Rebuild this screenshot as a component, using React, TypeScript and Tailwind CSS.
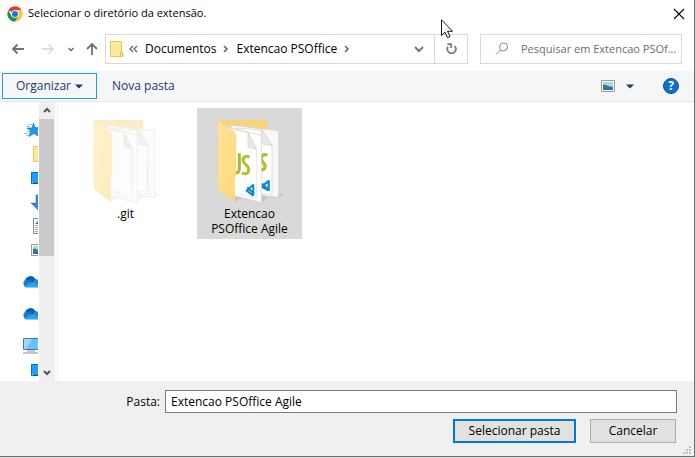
import type { ReactNode } from "react";
import { useState } from "react";

function ChromeLogo() {
  return (
    <svg width="16" height="16" viewBox="0 0 48 48" aria-hidden="true">
      <circle cx="24" cy="24" r="23" fill="#fff" />
      <path d="M24 24 L4.1 12.5 A23 23 0 0 1 43.9 12.5 L24 12.5 Z" fill="#e33b2e" />
      <path d="M24 12.5 H43.9 A23 23 0 0 1 24 47 L34 29.7 Z" fill="#fcc934" />
      <path d="M4.1 12.5 L14 29.7 L34 29.7 L24 47 A23 23 0 0 1 4.1 12.5 Z" fill="#1e9448" />
      <circle cx="24" cy="24" r="11.5" fill="#fff" />
      <circle cx="24" cy="24" r="9" fill="#1a73e8" />
    </svg>
  );
}

function Arrow({ kind }: { kind: "left" | "right" | "up" }) {
  const d = {
    left: "M13 7H2M6.5 2.5L2 7l4.500 4.500",
    right: "M1 7h11M7.500 2.500L12 7l-4.500 4.500",
    up: "M7 13V2M2 7l5-5 5 5",
  }[kind];
  return (
    <svg width="14" height="14" viewBox="0 0 14 14" fill="none" aria-hidden="true" stroke={kind === "right" ? "#d4d4d4" : "#717171"} strokeWidth={kind === "right" ? 1.3 : 1.8}>
      <path d={d} />
    </svg>
  );
}

function Chevron({ d, w = 6, h = 8, width = 1.4, color = "#666" }: { d: string; w?: number; h?: number; width?: number; color?: string }) {
  return (
    <svg width={w} height={h} viewBox={`0 0 ${w} ${h}`} fill="none" stroke={color} strokeWidth={width} className="shrink-0" aria-hidden="true">
      <path d={d} />
    </svg>
  );
}

function Caret() {
  return (
    <svg width="8" height="5" viewBox="0 0 8 5" aria-hidden="true">
      <path d="M0 0.500h8L4 4.500z" fill="#1c3a63" />
    </svg>
  );
}

function SmallFolder() {
  return (
    <svg width="14" height="16" viewBox="0 0 14 16" aria-hidden="true">
      <path d="M.5.500h11v11l1.500 1v3H.5z" fill="#ffe79b" stroke="#e8c760" />
      <path d="M10.500 15v-3.500h2V15" fill="#fff0b8" stroke="#dcb955" />
    </svg>
  );
}

function BigFolder({ code }: { code: boolean }) {
  const edge = code ? "#d0d0d0" : "#e9e9e9";
  const sheet = code ? "#fff" : "#fdfdfd";
  const line = code ? "#f2dfae" : "#faecca";
  return (
    <svg width="71" height="86" viewBox="30 54 213 258" aria-hidden="true">
      <defs>
        <linearGradient id={code ? "flap-a" : "flap-b"} x1="0" y1="0" x2="1" y2="1">
          <stop offset="0" stopColor={code ? "#ffe59b" : "#fff2d0"} />
          <stop offset="1" stopColor={code ? "#fbd878" : "#fdebba"} />
        </linearGradient>
      </defs>
      <path d="M92 306l20-12 60 14 20-16 30 1 20-10-20-4-130 12z" fill={code ? "#bdbdbd" : "#f1f1f1"} opacity=".7" />
      <path d="M42 60H190V120H92z" fill={code ? "#f6d47e" : "#fcedc6"} />
      <path d="M80 75L224 92V292L150 284z" fill={code ? "#f8f8f8" : "#fbfbfb"} stroke={edge} strokeWidth="2" />
      <path d="M100 84L176 91L204 136V283L150 280z" fill={sheet} stroke={edge} strokeWidth="2" />
      <path d="M172 91l32 46-32-6z" fill={code ? "#e9e9e9" : "#f1f1f1"} stroke={edge} strokeWidth="2" />
      <path d="M150 84l24 5 26 44" fill="none" stroke={line} strokeWidth="2" />
      {code ? (
        <>
          <path d="M190 166c-16-7-23 7-14 20 13 12 8 27-8 22" fill="none" stroke="#b7bd2e" strokeWidth="10" />
          <path d="M194 241v32M194 243l-21 17 21 11M173 251l20 18" fill="none" stroke="#1388cf" strokeWidth="7" />
        </>
      ) : (
        <path d="M200 195v70" stroke="#f9ebc9" strokeWidth="2" />
      )}
      <path d="M62 79L172 106V308L92 287z" fill={sheet} stroke={edge} strokeWidth="2" />
      <path d="M80 88L132 98L158 150V296L94 280" fill={sheet} stroke={edge} strokeWidth="1.500" />
      <path d="M76 82l56 13 24 50" fill="none" stroke={line} strokeWidth="2" />
      <path d="M132 98l24 50-24-8z" fill={code ? "#e9e9e9" : "#f1f1f1"} stroke={edge} strokeWidth="2" />
      {code ? (
        <>
          <path d="M106 160v46c0 11-5 14-14 12" fill="none" stroke="#aeb52f" strokeWidth="9" />
          <path d="M136 172c-12-8-21 1-18 12 3 11 18 12 16 26-1 12-11 14-20 8" fill="none" stroke="#b7bd2e" strokeWidth="9" />
          <path d="M148 253v34M148 254l-20 18 20 15M130 262l18 17" fill="none" stroke="#1388cf" strokeWidth="6" />
        </>
      ) : (
        <path d="M152 153v112M94 270l54 20M176 274h20" fill="none" stroke="#f5ead0" strokeWidth="2" />
      )}
      <path d="M42 62L86 92c7 5 10 9 10 17V225l-4 12v68L42 267z" fill={`url(#${code ? "flap-a" : "flap-b"})`} stroke={code ? "#f4d27b" : "#fbe8b8"} strokeWidth="1" />
    </svg>
  );
}

function PictureIcon() {
  return (
    <svg width="14" height="12" viewBox="0 0 14 12" aria-hidden="true">
      <path d="M.5.500h13v11H.5z" fill="#fff" stroke="#9a9a9a" />
      <path d="M2 2h10v8H2z" fill="#a9d3f5" />
      <path d="M2 5c3-1 5 2 10 2v3H2z" fill="#3c7d6b" />
      <path d="M2 8h10v2H2z" fill="#2c6faf" />
    </svg>
  );
}

function DesktopIcon() {
  return (
    <svg width="15" height="12" viewBox="0 0 15 12" aria-hidden="true">
      <path d="M.5.500h14v11H.5z" fill="#1ba1ff" stroke="#0a6cbb" />
      <path d="M1 10.500h14v1H1z" fill="#0b5aa0" />
      <path d="M1 10h1v1H1z" fill="#fff" />
    </svg>
  );
}

function CloudIcon() {
  return (
    <svg width="20" height="12" viewBox="0 0 20 12" aria-hidden="true">
      <path d="M3 6a5.500 5.500 0 0 1 10-3.500L17 6l-6 3z" fill="#0a5fb6" />
      <path d="M4 11a4 4 0 0 1-1-7c3-1 5 0 8 3l-5 4z" fill="#1579cf" />
      <path d="M11 5c4-3 8-1 8 2s-2 4-4 4z" fill="#1a8ee0" />
      <path d="M2 10l9-4 7 4c-1 1-2 1.500-3 1.500H4.500c-1 0-2-.5-2.500-1.500z" fill="#2ba6ea" />
    </svg>
  );
}

const places: { name: string; row: string; icon: ReactNode }[] = [
  {
    name: "Acesso rápido",
    row: "pl-[24px]",
    icon: (
      <svg width="17" height="14" viewBox="0 0 17 14" aria-hidden="true">
        <path d="M9.500 0l1.500 4.500H17L13 8l2 5.500-5-3-5 3L6.500 8 3 5h5z" fill="#1e97ea" stroke="#1379c4" strokeWidth=".6" />
        <path d="M4 1.500h4M2 3.500h4M3 8.500h3M0 10.500h4M2 12.500h3" stroke="#8ccff5" />
      </svg>
    ),
  },
  { name: "Pasta", row: "pl-[33px]", icon: <SmallFolder /> },
  { name: "Área de Trabalho", row: "pl-[31px]", icon: <DesktopIcon /> },
  {
    name: "Downloads",
    row: "pl-[31px]",
    icon: (
      <svg width="14" height="16" viewBox="0 0 14 16" aria-hidden="true">
        <path d="M5 1h4v8h5l-7 7-7-7h5z" fill="#3489dc" stroke="#2368b0" strokeWidth=".5" />
      </svg>
    ),
  },
  {
    name: "Documentos",
    row: "pl-[33px]",
    icon: (
      <svg width="13" height="16" viewBox="0 0 13 16" aria-hidden="true">
        <path d="M.5.500h9l3 3v12H.5z" fill="#fff" stroke="#8a8a8a" />
        <path d="M2 7.500h9M2 9.500h9M2 11.500h9M2 13.500h9" stroke="#aaa" />
        <path d="M2 6l3-3v3z" fill="#1583d2" />
      </svg>
    ),
  },
  { name: "Imagens", row: "pl-[31px]", icon: <PictureIcon /> },
  { name: "OneDrive", row: "mt-2 pl-[22px]", icon: <CloudIcon /> },
  { name: "OneDrive pessoal", row: "mt-2 pl-[22px]", icon: <CloudIcon /> },
  {
    name: "Este Computador",
    row: "mt-2 pl-[23px]",
    icon: (
      <svg width="17" height="16" viewBox="0 0 17 16" aria-hidden="true">
        <path d="M.5.500h16v11H.5z" fill="#66c2ff" stroke="#4b7894" />
        <path d="M1 1h8L3 11H1z" fill="#9edaff" />
        <path d="M4 13h8" stroke="#8e9aa5" />
        <path d="M0 15h17" stroke="#a8b3bd" strokeWidth="1.500" />
      </svg>
    ),
  },
  { name: "Área de Trabalho local", row: "pl-[31px]", icon: <DesktopIcon /> },
];

const folders = [
  { label: ".git", code: false },
  { label: "Extencao PSOffice Agile", code: true },
];

export default function App() {
  const [selected, setSelected] = useState("Extencao PSOffice Agile");
  return (
    <div className="h-screen bg-[#dcdcdc] pb-px font-['Open_Sans','Noto_Sans',sans-serif] text-xs text-black">
      <main className="relative flex h-full flex-col overflow-hidden border-r border-b border-[#6f6f6f] bg-white">
        <header className="flex h-[27px] shrink-0 items-center gap-[5px] pr-[9px] pl-[7px]">
          <ChromeLogo />
          <h1 className="grow text-[11px] whitespace-nowrap">Selecionar o diretório da extensão.</h1>
          <button type="button" aria-label="Fechar">
            <svg width="12" height="12" viewBox="0 0 12 12" stroke="#000" strokeWidth="1.100" aria-hidden="true">
              <path d="M1 1l10 10M11 1L1 11" />
            </svg>
          </button>
        </header>

        <nav className="flex h-11 shrink-0 items-center pr-3 pl-[11px]" aria-label="Navegação">
          <button type="button" aria-label="Voltar"><Arrow kind="left" /></button>
          <button type="button" aria-label="Avançar" className="ml-4"><Arrow kind="right" /></button>
          <button type="button" aria-label="Locais recentes" className="ml-[13px]">
            <Chevron d="M.5 1L3 3.500 5.500 1" h={5} />
          </button>
          <button type="button" aria-label="Acima" className="ml-[11px]"><Arrow kind="up" /></button>
          <div className="ml-[6px] flex h-[30px] min-w-0 grow items-center border border-[#d9d9d9]">
            <div className="flex min-w-0 grow items-center pl-1 whitespace-nowrap">
              <SmallFolder />
              <span className="ml-[5px] flex"><Chevron d="M4 1L1 4l3 3M8 1L5 4l3 3" w={9} /></span>
              <button type="button" className="ml-[7px]">Documentos</button>
              <span className="ml-[7px] flex"><Chevron d="M1 1l3 3-3 3" width={1.6} /></span>
              <button type="button" className="ml-[7px]">Extencao PSOffice</button>
              <span className="ml-[7px] flex"><Chevron d="M1 1l3 3-3 3" width={1.6} /></span>
            </div>
            <button type="button" aria-label="Locais anteriores" className="mr-[10px]">
              <Chevron d="M1 1l4 4 4-4" w={10} h={7} width={2} color="#777" />
            </button>
            <button type="button" aria-label="Atualizar" className="flex h-full w-[33px] items-center justify-center border-l border-[#d9d9d9]">
              <svg width="11" height="12" viewBox="0 0 11 12" fill="none" stroke="#777" strokeWidth="1.700" aria-hidden="true">
                <path d="M8.500 3A4.200 4.200 0 1 1 2 3.800M1.500 1.200H5V5" />
              </svg>
            </button>
          </div>
          <label className="ml-3 flex h-[30px] w-[202px] shrink-0 items-center border border-[#d9d9d9] pl-[14px]">
            <svg width="14" height="14" viewBox="0 0 14 14" fill="none" stroke="#8a8a8a" aria-hidden="true">
              <circle cx="8.500" cy="5" r="4" />
              <path d="M5.500 8L1 12.500" />
            </svg>
            <input type="text" role="searchbox" aria-label="Pesquisar" placeholder="Pesquisar em Extencao PSOf..." className="ml-3 min-w-0 grow text-[11px] outline-none placeholder:text-[#6d6d6d]" />
          </label>
        </nav>

        <div className="flex h-[31px] shrink-0 items-center border-b border-[#e5e5e5] bg-[#f4f6f8] pr-[15px] pl-[2px] text-[#1c3a63]" role="toolbar">
          <button type="button" className="flex h-[26px] w-[95px] items-center justify-center gap-1 border border-[#2a9ad8]">
            Organizar <Caret />
          </button>
          <button type="button" className="ml-[15px]">Nova pasta</button>
          <button type="button" aria-label="Exibição" className="ml-auto"><PictureIcon /></button>
          <button type="button" aria-label="Mais opções" className="ml-[11px]"><Caret /></button>
          <button type="button" aria-label="Ajuda" className="ml-[29px] flex size-4 items-center justify-center rounded-full border border-[#084f94] bg-[#0c6fcb] text-xs font-bold text-white">?</button>
        </div>

        <div className="flex min-h-0 grow">
          <aside className="flex w-[39px] shrink-0 flex-col overflow-hidden pt-4 pr-px" aria-label="Locais">
            {places.map((p) => (
              <div key={p.name} className="shrink-0 overflow-hidden">
                <button type="button" aria-label={p.name} className={`flex h-6 items-center [&>svg]:shrink-0 ${p.row}`}>{p.icon}</button>
              </div>
            ))}
          </aside>
          <div className="flex w-4 shrink-0 flex-col bg-[#efefef]">
            <button type="button" aria-label="Rolar para cima" className="flex h-[17px] shrink-0 items-center justify-center">
              <Chevron d="M1 5l3-3 3 3" w={8} h={7} width={2} color="#555" />
            </button>
            <div className="mr-px h-[137px] bg-[#cbcbcb]" />
            <button type="button" aria-label="Rolar para baixo" className="mt-auto flex h-[17px] shrink-0 items-center justify-center">
              <Chevron d="M1 2l3 3 3-3" w={8} h={7} width={2} color="#555" />
            </button>
          </div>
          <section className="ml-[2px] flex grow items-start gap-[19px] border-l border-[#f0f0f0] pt-[6px] pl-[15px]" aria-label="Arquivos">
            {folders.map((f) => (
              <button
                key={f.label}
                type="button"
                onClick={() => setSelected(f.label)}
                className={`flex h-[131px] w-[105px] flex-col items-center gap-[2px] px-3 pt-[10px] leading-[15px] ${selected === f.label ? "bg-[#d9d9d9]" : ""}`}
              >
                <BigFolder code={f.code} />
                <span>{f.label}</span>
              </button>
            ))}
          </section>
        </div>

        <footer className="shrink-0 bg-[#f0f0f0] pt-[9px] pr-[17px] pb-[13px]">
          <div className="flex items-center">
            <label htmlFor="folder" className="w-[165px] shrink-0 pr-[5px] text-right">Pasta:</label>
            <input id="folder" defaultValue="Extencao PSOffice Agile" className="h-[23px] min-w-0 grow border border-[#7a7a7a] bg-white px-[5px] outline-none" />
          </div>
          <div className="mt-[6px] flex justify-end gap-[14px] pr-px">
            <button type="button" className="h-6 w-[123px] border-2 border-[#0078d7] bg-[#e1e1e1]">Selecionar pasta</button>
            <button type="button" className="h-6 w-[86px] border border-[#adadad] bg-[#e1e1e1]">Cancelar</button>
          </div>
        </footer>

        <svg className="absolute right-[3px] bottom-[2px]" width="8" height="8" viewBox="0 0 8 8" fill="#bfbfbf" aria-hidden="true">
          <path d="M6 0h2v2H6zM3 3h2v2H3zM6 3h2v2H6zM0 6h2v2H0zM3 6h2v2H3zM6 6h2v2H6z" />
        </svg>
        <svg className="absolute top-[19px] left-[441px]" width="12" height="20" viewBox="0 0 12 20" aria-hidden="true">
          <path d="M.5.800v15.700l3.500-3.300 2.600 5.500 2.400-1.100-2.500-5.300h5z" fill="#fff" stroke="#15151f" />
        </svg>
      </main>
    </div>
  );
}
